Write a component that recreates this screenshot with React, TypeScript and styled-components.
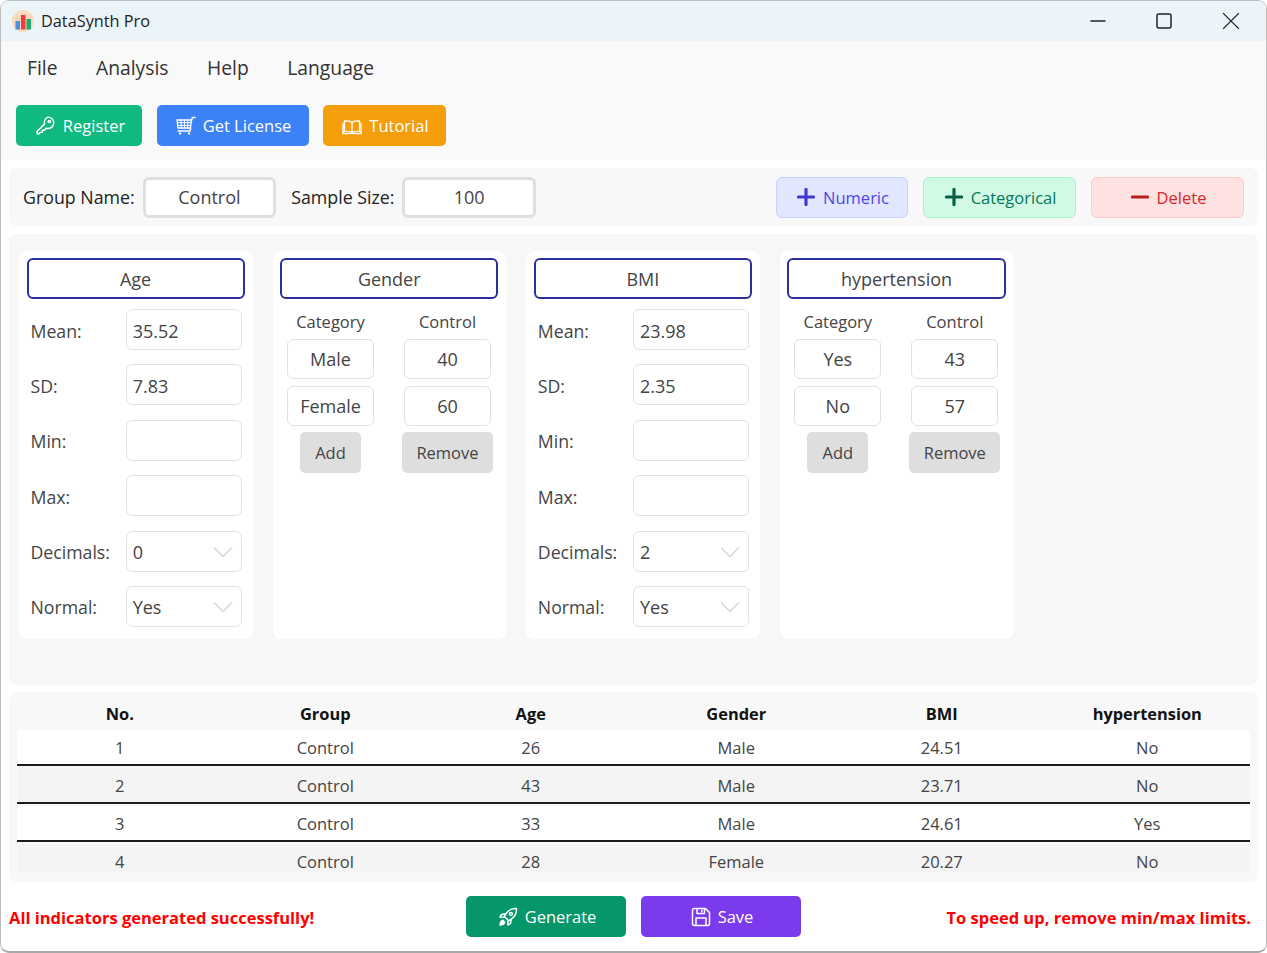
import React from "react";
import styled, { createGlobalStyle } from "styled-components";

const GlobalStyle = createGlobalStyle`
    html, body {
        margin: 0;
        padding: 0;
        background: #ffffff;
    }
    * {
        box-sizing: border-box;
    }
    body, input, button {
        font-family: "Open Sans", "Noto Sans", sans-serif;
    }
`

const KeyIcon = () => (
    <svg width="21" height="21" viewBox="0 0 22 22" fill="none" stroke="currentColor" strokeWidth="1.5" strokeLinejoin="round" strokeLinecap="round">
        <path d="M13.6 2.2a6 6 0 0 1 6 6 6 6 0 0 1-6 6c-.7 0-1.3-.1-1.9-.3L9.8 16H7.6v2.2H5.4l-1.1 1.4-2 .1-.2-2.4 8-8a6 6 0 0 1-.3-1.6 6 6 0 0 1 4-5.5z" />
        <circle cx="15" cy="6.8" r="1.2" />
    </svg>
)

const CartIcon = () => (
    <svg width="20" height="20" viewBox="0 0 20 20" fill="none" stroke="currentColor" strokeWidth="1.3" strokeLinecap="round">
        <path d="M1 4h14.5l-1 8H2z" />
        <path d="M1.4 6.7h13.6M1.7 9.4h13M5 4l.4 8M8.5 4v8M12 4l-.4 8" strokeWidth="1" />
        <path d="M15.4 4.6 16.4 1.5h2.6M14.6 12l-.6 3H2" strokeWidth="1.5" />
        <circle cx="4" cy="17.4" r="1.2" fill="currentColor" stroke="none" />
        <circle cx="13" cy="17.4" r="1.2" fill="currentColor" stroke="none" />
    </svg>
)

const BookIcon = () => (
    <svg width="20" height="20" viewBox="0 0 20 20" fill="none" stroke="currentColor" strokeWidth="1.4" strokeLinejoin="round">
        <path d="M10 6.600C8.800 5.400 7 5 4.800 5H2.400v10.600h3.200c2 0 3.400.3 4.400 1.200 1-.9 2.400-1.200 4.400-1.200h3.200V5h-2.400C13 5 11.200 5.400 10 6.600z" />
        <path d="M10 6.600v10.200M1 7.200v10.400h18V7.200" />
    </svg>
)

const RocketIcon = () => (
    <svg width="20" height="20" viewBox="0 0 20 20" fill="none" stroke="currentColor" strokeWidth="1.5" strokeLinejoin="round" strokeLinecap="round">
        <path d="M18.400 1.600c-4-.3-7.400 1.200-9.700 4.200l-2.500 3.400 4.600 4.600 3.400-2.500c3-2.300 4.500-5.700 4.200-9.700z" />
        <circle cx="13" cy="7" r="1.400" />
        <path d="M7.400 6.800 3.600 7.400 2 10l4.200.2M13.200 12.600l-.6 3.800-2.600 1.600-.2-4.200" />
        <path d="M4.800 13.200c-1.500.4-2.500 1.700-2.800 4.800 3.100-.3 4.400-1.300 4.800-2.800z" fill="currentColor" />
    </svg>
)

const SaveIcon = () => (
    <svg width="20" height="20" viewBox="0 0 20 20" fill="none" stroke="currentColor" strokeWidth="1.5" strokeLinejoin="round">
        <path d="M3.500 1.500h11l4 4v11a2 2 0 0 1-2 2h-13a2 2 0 0 1-2-2v-13a2 2 0 0 1 2-2z" />
        <path d="M6 1.500v5h7.500v-5M5 18.500v-7.500h10v7.500" />
        <path d="M10.800 2.800v2.400" />
    </svg>
)

const PlusIcon = () => (
    <svg width="18" height="18" viewBox="0 0 18 18" fill="none" stroke="currentColor" strokeWidth="3.200" strokeLinecap="round">
        <path d="M9 1.500v15M1.500 9h15" />
    </svg>
)

const MinusIcon = () => (
    <svg width="18" height="18" viewBox="0 0 18 18" fill="none" stroke="currentColor" strokeWidth="3.200" strokeLinecap="round">
        <path d="M1.500 9h15" />
    </svg>
)

const AppLogo = () => (
    <svg width="22" height="22" viewBox="0 0 22 22">
        <circle cx="11" cy="11" r="11" fill="#fbdcc0" />
        <path d="M2 8h18M2 12h18M2 16h18M5 4v15M9 4v15M13 4v15M17 4v15" stroke="#e6c8ae" strokeWidth="0.5" />
        <rect x="3.500" y="11" width="4.500" height="8.500" fill="#4a90e2" />
        <rect x="9" y="5" width="4.500" height="14.500" fill="#ef3b3b" />
        <rect x="14.500" y="9" width="4.500" height="10.500" fill="#1fa971" />
    </svg>
)

const Chevron = () => (
    <svg width="20" height="12" viewBox="0 0 20 12" fill="none" stroke="#d4d4d4" strokeWidth="1.300">
        <path d="M1 1.500 10 10.500 19 1.500" />
    </svg>
)

interface ButtonProps {
    $bg: string
    $width: number
}

const ColorButton = styled.button<ButtonProps>`
    display: flex;
    justify-content: center;
    align-items: center;
    gap: 7px;
    width: ${props => props.$width}px;
    height: 41px;
    padding: 0 0 0 2px;
    flex-shrink: 0;

    border: none;
    border-radius: 5px;
    background-color: ${props => props.$bg};
    color: #ffffff;
    font-size: 16.500px;
`

interface TintProps {
    $bg: string
    $line: string
    $text: string
    $icon: string
    $width: number
}

const TintButton = styled.button<TintProps>`
    display: flex;
    justify-content: center;
    align-items: center;
    gap: 8px;
    width: ${props => props.$width}px;
    height: 41px;
    padding: 0 0 0 2px;

    border: 1.500px solid ${props => props.$line};
    border-radius: 6px;
    background-color: ${props => props.$bg};
    color: ${props => props.$text};
    font-size: 16.500px;

    svg {
        color: ${props => props.$icon};
    }
`

const Window = styled.div`
    display: flex;
    flex-direction: column;
    width: 1267px;
    height: 953px;
    overflow: hidden;

    border: 1px solid #bdbdbd;
    border-bottom: 2px solid #a8a8a8;
    border-radius: 9px;
    background-color: #ffffff;
    color: #333333;
`

const TitleBar = styled.div`
    display: flex;
    align-items: center;
    flex-shrink: 0;
    height: 40px;
    padding-left: 11px;
    background-color: #ebf4f9;
`

const AppTitle = styled.span`
    margin-left: 7px;
    font-size: 16.300px;
    color: #222222;
`

const WindowControls = styled.div`
    display: flex;
    align-items: center;
    margin-left: auto;
    padding-right: 26px;
    gap: 50px;
    color: #222222;
`

const MenuBar = styled.div`
    display: flex;
    align-items: center;
    gap: 38.500px;
    height: 53px;
    padding-left: 26px;
    background-color: #f9f9f9;
`

const MenuItem = styled.span`
    font-size: 19.300px;
    color: #333333;
`

const Toolbar = styled.div`
    display: flex;
    gap: 14.500px;
    height: 66px;
    padding: 11px 15px 14px;
    background-color: #f9f9f9;
`

const Content = styled.div`
    display: flex;
    flex-direction: column;
    gap: 8px;
    padding: 8px 8px 0;
`

const GroupBar = styled.div`
    display: flex;
    align-items: center;
    height: 58px;
    padding: 0 14px;

    border-radius: 8px;
    background-color: #f8f8f8;
`

const GroupLabel = styled.span`
    margin-right: 8px;
    font-size: 17.800px;
    color: #222222;
`

const GroupInput = styled.input<{ $width: number }>`
    width: ${props => props.$width}px;
    height: 41px;
    margin-right: 15px;

    border: 3px solid #dfdfdf;
    border-radius: 6px;
    background-color: #ffffff;
    text-align: center;
    font-size: 18px;
    color: #444444;
`

const GroupActions = styled.div`
    display: flex;
    gap: 15px;
    margin-left: auto;
`

const CardsArea = styled.div`
    display: flex;
    align-items: flex-start;
    gap: 20px;
    height: 451px;
    margin-bottom: -1px;
    padding: 17px 10px;

    border-radius: 8px;
    background-color: #f7f7f7;
`

const Card = styled.div`
    display: flex;
    flex-direction: column;
    width: 233.670px;
    height: 388px;
    padding: 7px 8px 7px 7.500px;

    border-radius: 8px;
    background-color: #ffffff;
`

const CardName = styled.input`
    width: 100%;
    height: 41px;
    flex-shrink: 0;

    border: 2px solid #2c2f9e;
    border-radius: 6px;
    background-color: #ffffff;
    text-align: center;
    font-size: 18px;
    color: #444444;
`

const FieldList = styled.div`
    display: flex;
    flex-direction: column;
    gap: 14.400px;
    margin-top: 10px;
`

const FieldRow = styled.div`
    display: flex;
    align-items: center;
    justify-content: space-between;
    padding: 0 3px 0 4px;
`

const FieldLabel = styled.span`
    padding-top: 2px;
    font-size: 17.700px;
    color: #444444;
`

const FieldInput = styled.input`
    width: 116px;
    height: 41px;
    padding: 2px 6px 0;

    border: 1px solid #e2e2e2;
    border-radius: 6px;
    background-color: #ffffff;
    font-size: 18px;
    color: #444444;
`

const FieldSelect = styled.div`
    display: flex;
    align-items: center;
    justify-content: space-between;
    width: 116px;
    height: 41px;
    padding: 2px 8px 0 6px;

    border: 1px solid #e2e2e2;
    border-radius: 6px;
    background-color: #ffffff;
    font-size: 18px;
    color: #444444;
`

const CategoryGrid = styled.div`
    display: grid;
    grid-template-columns: 117px 117px;
    justify-content: center;
    justify-items: center;
    row-gap: 6.300px;
    margin: 0 -7.500px 0 -8px;
`

const CategoryHead = styled.span`
    margin-top: 11px;
    font-size: 16.500px;
    line-height: 23px;
    color: #444444;
`

const CategoryInput = styled.input`
    width: 87px;
    height: 40px;

    border: 1px solid #e2e2e2;
    border-radius: 6px;
    background-color: #ffffff;
    text-align: center;
    font-size: 18px;
    color: #444444;
`

const GrayButton = styled.button<{ $width: number }>`
    width: ${props => props.$width}px;
    height: 41px;
    padding: 0;

    border: none;
    border-radius: 5px;
    background-color: #dedede;
    font-size: 16.500px;
    color: #444444;
`

const TablePanel = styled.div`
    display: flex;
    flex-direction: column;
    height: 190px;
    padding: 0 8px 9px;

    border-radius: 8px;
    background-color: #f8f8f8;
`

const TableGrid = styled.div`
    display: grid;
    grid-template-columns: repeat(6, 1fr);
    align-items: center;
    text-align: center;
`

const HeaderRow = styled(TableGrid)`
    flex-shrink: 0;
    height: 38px;
    padding-top: 4px;
    font-size: 16.400px;
    font-weight: 700;
    color: #111111;
`

const RowsClip = styled.div`
    flex: 1;
    overflow: hidden;
`

const DataRow = styled(TableGrid)<{ $even: boolean }>`
    height: 36px;
    margin-bottom: 2px;
    padding-top: 1px;

    border-bottom: 2px solid #1c1c1c;
    border-radius: 5px 5px 0 0;
    background-color: ${props => props.$even ? "#f4f4f4" : "#ffffff"};
    font-size: 16.500px;
    color: #444444;
`

const Footer = styled.div`
    display: grid;
    grid-template-columns: 1fr auto 1fr;
    align-items: center;
    margin-top: 14px;
    padding: 0 15px;
`

const FooterButtons = styled.div`
    display: flex;
    gap: 15px;
`

const StatusText = styled.span<{ $right?: boolean }>`
    margin-left: ${props => props.$right ? "0" : "-7px"};
    padding-top: 1px;
    font-size: 16.500px;
    font-weight: 700;
    color: #ff0000;
    text-align: ${props => props.$right ? "right" : "left"};
`

const fields = ["Mean", "SD", "Min", "Max"]

const NumericCard = (props: { name: string, mean: string, sd: string, decimals: string }) => {
    const values = [props.mean, props.sd, "", ""]
    return (
        <Card>
            <CardName readOnly value={props.name} />
            <FieldList>
                {fields.map((field, i) => (
                    <FieldRow key={field}>
                        <FieldLabel>{field}:</FieldLabel>
                        <FieldInput readOnly value={values[i]} />
                    </FieldRow>
                ))}
                <FieldRow>
                    <FieldLabel>Decimals:</FieldLabel>
                    <FieldSelect>{props.decimals}<Chevron /></FieldSelect>
                </FieldRow>
                <FieldRow>
                    <FieldLabel>Normal:</FieldLabel>
                    <FieldSelect>Yes<Chevron /></FieldSelect>
                </FieldRow>
            </FieldList>
        </Card>
    )
}

const CategoryCard = (props: { name: string, rows: string[][] }) => {
    return (
        <Card>
            <CardName readOnly value={props.name} />
            <CategoryGrid>
                <CategoryHead>Category</CategoryHead>
                <CategoryHead>Control</CategoryHead>
                {props.rows.map(row => (
                    <React.Fragment key={row[0]}>
                        <CategoryInput readOnly value={row[0]} />
                        <CategoryInput readOnly value={row[1]} />
                    </React.Fragment>
                ))}
                <GrayButton $width={61}>Add</GrayButton>
                <GrayButton $width={91}>Remove</GrayButton>
            </CategoryGrid>
        </Card>
    )
}

const tableHead = ["No.", "Group", "Age", "Gender", "BMI", "hypertension"]
const tableRows = [
    ["1", "Control", "26", "Male", "24.51", "No"],
    ["2", "Control", "43", "Male", "23.71", "No"],
    ["3", "Control", "33", "Male", "24.61", "Yes"],
    ["4", "Control", "28", "Female", "20.27", "No"],
]

export default function App() {
    return (
        <Window>
            <GlobalStyle />
            <TitleBar>
                <AppLogo />
                <AppTitle>DataSynth Pro</AppTitle>
                <WindowControls>
                    <svg width="16" height="16" viewBox="0 0 16 16" stroke="currentColor" strokeWidth="1.300"><path d="M0.500 8h15" /></svg>
                    <svg width="16" height="16" viewBox="0 0 16 16" fill="none" stroke="currentColor" strokeWidth="1.500"><rect x="1" y="1" width="14" height="14" rx="2" /></svg>
                    <svg width="18" height="18" viewBox="0 0 16 16" stroke="currentColor" strokeWidth="1.200"><path d="M1 1l14 14M15 1L1 15" /></svg>
                </WindowControls>
            </TitleBar>
            <MenuBar>
                <MenuItem>File</MenuItem>
                <MenuItem>Analysis</MenuItem>
                <MenuItem>Help</MenuItem>
                <MenuItem>Language</MenuItem>
            </MenuBar>
            <Toolbar>
                <ColorButton $bg="#10b981" $width={126}><KeyIcon />Register</ColorButton>
                <ColorButton $bg="#3b82f6" $width={152}><CartIcon />Get License</ColorButton>
                <ColorButton $bg="#f59e0b" $width={123}><BookIcon />Tutorial</ColorButton>
            </Toolbar>
            <Content>
                <GroupBar>
                    <GroupLabel>Group Name:</GroupLabel>
                    <GroupInput $width={133.5} readOnly value="Control" />
                    <GroupLabel>Sample Size:</GroupLabel>
                    <GroupInput $width={133.5} readOnly value="100" />
                    <GroupActions>
                        <TintButton $bg="#e0e7ff" $line="#c7d2fe" $text="#4f46e5" $icon="#4338ca" $width={132}><PlusIcon />Numeric</TintButton>
                        <TintButton $bg="#d1fae5" $line="#a7f3d0" $text="#047857" $icon="#065f46" $width={153}><PlusIcon />Categorical</TintButton>
                        <TintButton $bg="#fee2e2" $line="#fecaca" $text="#dc2626" $icon="#b91c1c" $width={153}><MinusIcon />Delete</TintButton>
                    </GroupActions>
                </GroupBar>
                <CardsArea>
                    <NumericCard name="Age" mean="35.52" sd="7.83" decimals="0" />
                    <CategoryCard name="Gender" rows={[["Male", "40"], ["Female", "60"]]} />
                    <NumericCard name="BMI" mean="23.98" sd="2.35" decimals="2" />
                    <CategoryCard name="hypertension" rows={[["Yes", "43"], ["No", "57"]]} />
                </CardsArea>
                <TablePanel>
                    <HeaderRow>
                        {tableHead.map(head => <span key={head}>{head}</span>)}
                    </HeaderRow>
                    <RowsClip>
                        {tableRows.map((row, i) => (
                            <DataRow key={row[0]} $even={i % 2 === 1}>
                                {row.map((cell, j) => <span key={j}>{cell}</span>)}
                            </DataRow>
                        ))}
                    </RowsClip>
                </TablePanel>
            </Content>
            <Footer>
                <StatusText>All indicators generated successfully!</StatusText>
                <FooterButtons>
                    <ColorButton $bg="#059669" $width={160}><RocketIcon />Generate</ColorButton>
                    <ColorButton $bg="#7c3aed" $width={160}><SaveIcon />Save</ColorButton>
                </FooterButtons>
                <StatusText $right>To speed up, remove min/max limits.</StatusText>
            </Footer>
        </Window>
    )
}
